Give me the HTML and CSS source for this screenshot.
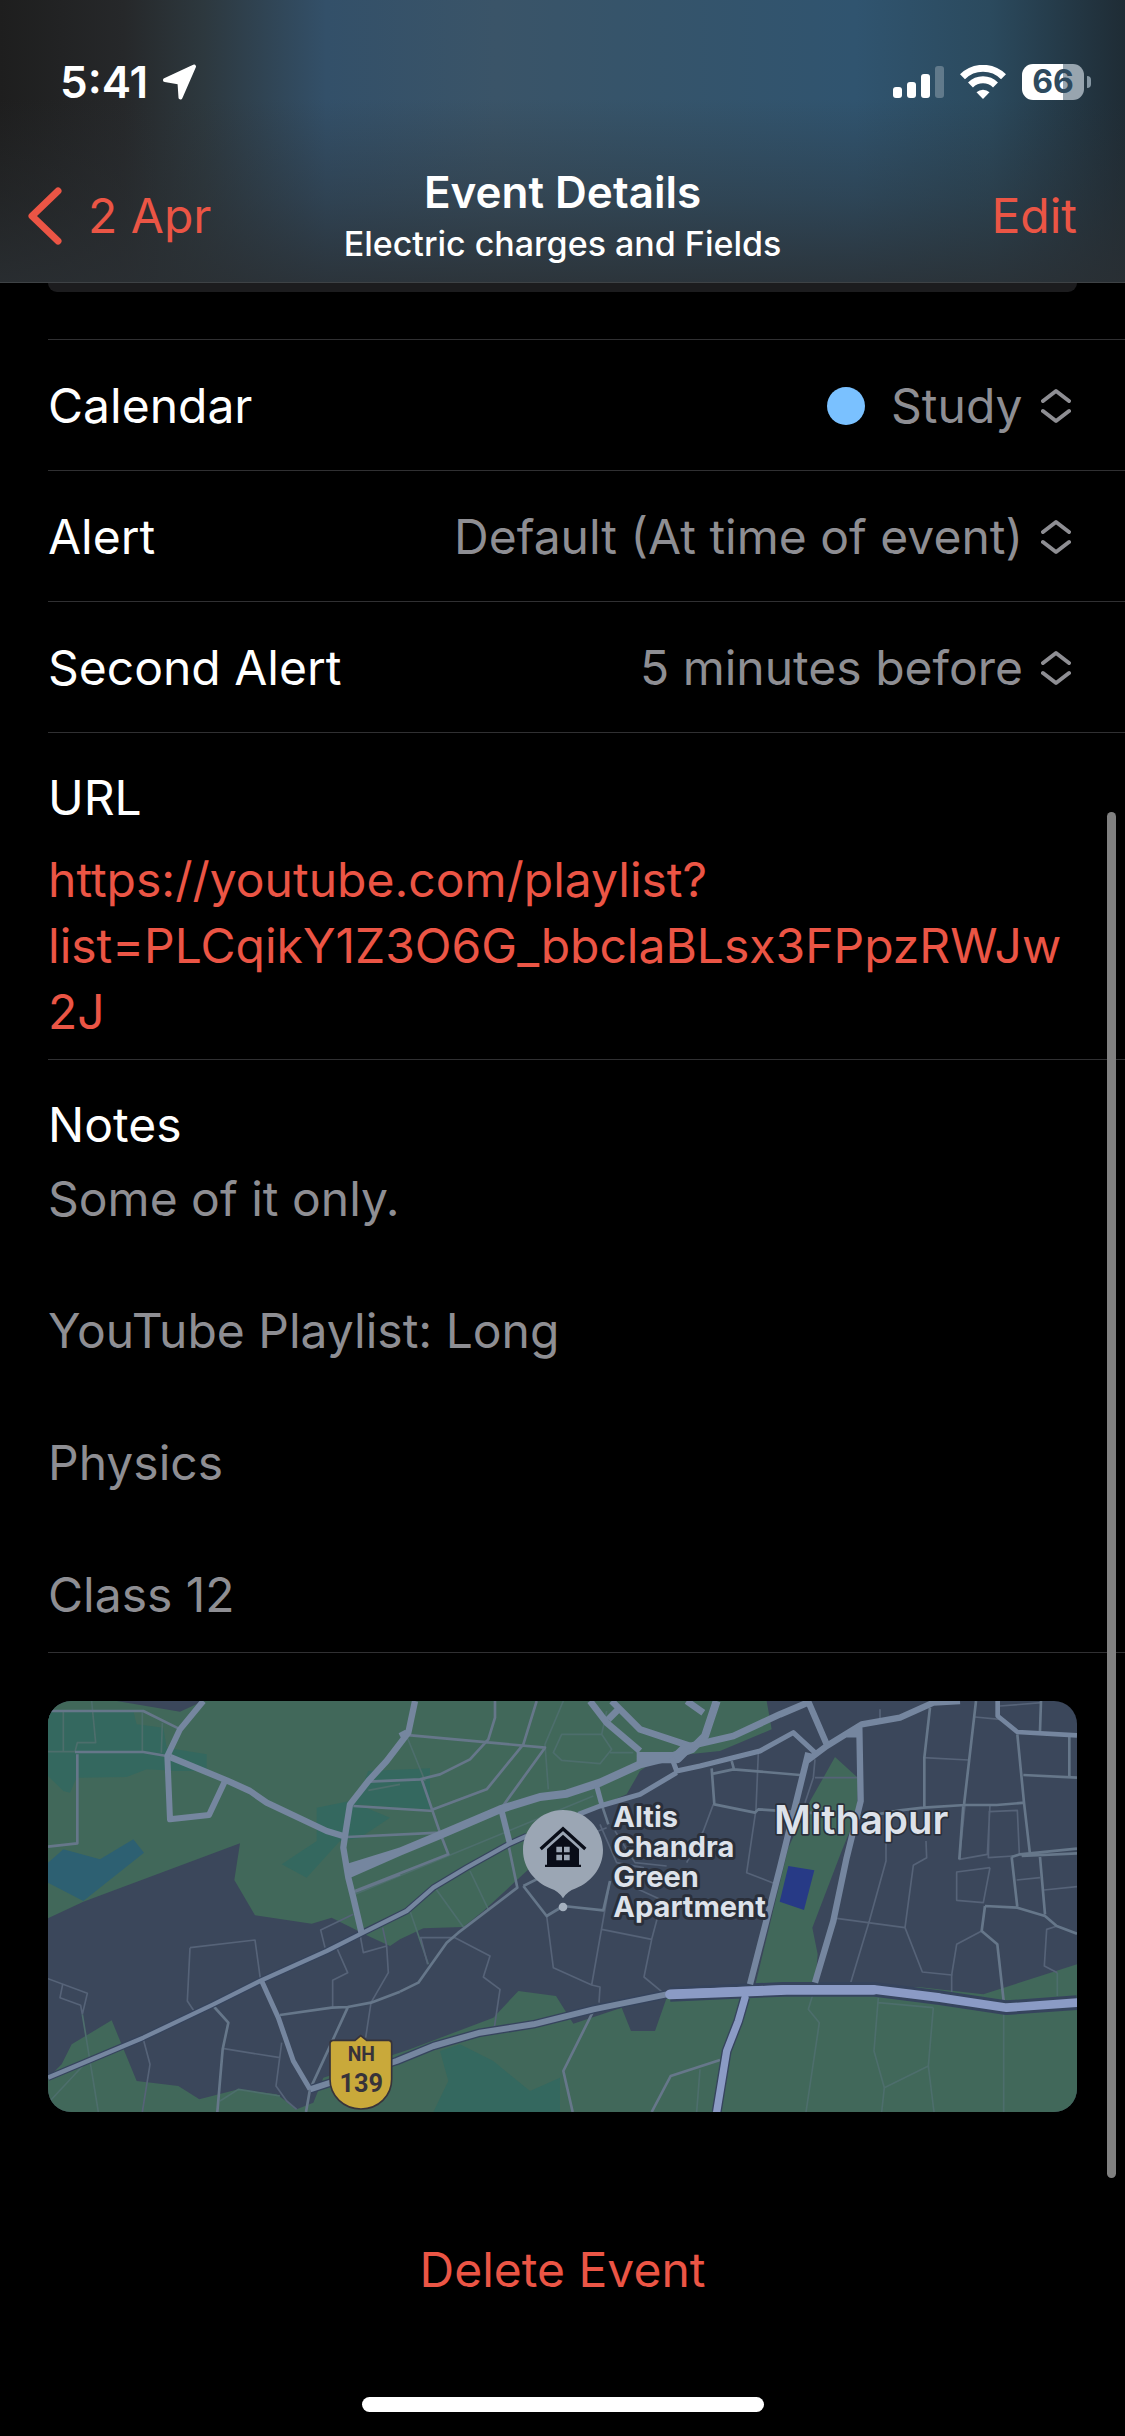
FILE: index.html
```html
<!DOCTYPE html>
<html lang="en">
<head>
<meta charset="utf-8">
<meta name="viewport" content="width=device-width, initial-scale=1">
<title>Event Details</title>
<link rel="stylesheet" href="styles.css">
</head>
<body>
<div class="screen">
  <header class="header">
    <div class="status">
      <div class="status-side">
        <span class="time">5:41</span>
        <svg class="location" viewBox="0 0 36 36" aria-hidden="true"><path d="M3 16 32 2.5 18.5 33.500 17.500 18.500Z" fill="#fff" stroke="#fff" stroke-width="4" stroke-linejoin="round"/></svg>
      </div>
      <div class="status-side status-icons">
        <svg class="signal" viewBox="0 0 51 32" aria-hidden="true" fill="#fff"><rect y="21" width="9" height="11" rx="3"/><rect x="14" y="16" width="9" height="16" rx="3"/><rect x="28" y="8" width="9" height="24" rx="3"/><rect x="42" width="9" height="32" rx="3" opacity=".25"/></svg>
        <svg class="wifi" viewBox="0 0 46 34" aria-hidden="true"><g fill="none" stroke="#fff" stroke-width="7"><path d="M2.500 11.800a29 29 0 0 1 41 0"/><path d="M10.500 20a17.800 17.800 0 0 1 25 0"/></g><path d="M23 34 16.500 27.300a9.300 9.300 0 0 1 13 0Z" fill="#fff"/></svg>
        <div class="battery"><span class="battery-body">66</span><span class="battery-tip"></span></div>
      </div>
    </div>
    <nav class="nav">
      <a class="back" href="#day">
        <svg class="back-icon" viewBox="0 0 34 58" aria-hidden="true"><path d="M30 4 4 29 30 54" fill="none" stroke="currentColor" stroke-width="7" stroke-linecap="round" stroke-linejoin="round"/></svg>
        <span>2 Apr</span>
      </a>
      <div class="titles">
        <h1 class="title">Event Details</h1>
        <p class="subtitle">Electric charges and Fields</p>
      </div>
      <button class="edit" type="button">Edit</button>
    </nav>
  </header>

  <main class="content">
    <div class="card-edge"></div>
    <div class="row">
      <label for="calendar">Calendar</label>
      <div class="value">
        <span class="dot"></span>
        <select id="calendar"><option>Study</option></select>
        <svg class="updown" viewBox="0 0 30 36" aria-hidden="true"><path d="M2 13 15 3 28 13M2 23 15 33 28 23"/></svg>
      </div>
    </div>
    <div class="row">
      <label for="alert">Alert</label>
      <div class="value">
        <select id="alert"><option>Default (At time of event)</option></select>
        <svg class="updown" viewBox="0 0 30 36" aria-hidden="true"><path d="M2 13 15 3 28 13M2 23 15 33 28 23"/></svg>
      </div>
    </div>
    <div class="row">
      <label for="second-alert">Second Alert</label>
      <div class="value">
        <select id="second-alert"><option>5 minutes before</option></select>
        <svg class="updown" viewBox="0 0 30 36" aria-hidden="true"><path d="M2 13 15 3 28 13M2 23 15 33 28 23"/></svg>
      </div>
    </div>
    <section class="block url-block">
      <h2 class="label">URL</h2>
      <a class="url" href="https://youtube.com/playlist?list=PLCqikY1Z3O6G_bbclaBLsx3FPpzRWJw2J">https://youtube.com/playlist?<wbr>list=PLCqikY1Z3O6G_bbclaBLsx3FPpzRWJw<wbr>2J</a>
    </section>
    <section class="block notes-block">
      <h2 class="label">Notes</h2>
      <p class="notes">Some of it only.

YouTube Playlist: Long

Physics

Class 12</p>
    </section>

    <div class="map-wrap">
    <svg class="map" viewBox="144 60 3087 1233" role="img" aria-label="Map of Mithapur">
      <rect x="144" y="60" width="3087" height="1233" fill="#3b475b"/>
      <g fill="#41685a">
        <path d="M144 85 200 60H350L540 92 610 60H2300L2315 145 2160 210 2080 218 1970 235 1920 270 1880 340 1740 400 1640 520 1580 570 1450 690 1390 738 1270 742 1200 775 1170 795 1105 765 995 710 935 728 765 703 703 597 720 487 250 662 144 712Z"/>
        <path d="M144 1190 185 1150 215 1090 335 1018 410 1200 535 1215 598 1255 715 1225 830 1240 890 1285 940 1265 970 1190 1230 1105 1480 1010 1555 930 1668 945 1720 1028 1865 980 1893 1050 1965 1050 2000 950 2240 935 2755 918 2950 940 3231 850V1293H144Z"/>
        <path d="M2265 915 2365 500 2425 370 2505 228 2575 292 2570 400 2525 510 2437 740 2453 820 2445 915Z"/>
      </g>
      <g fill="#34685f">
        <path d="M144 90H400L410 130 490 140 500 200 620 220 620 270 530 270 440 265 380 288 230 290 210 335 190 330 144 285Z"/>
        <path d="M950 380 1050 360 1170 410 1080 470 1020 480 920 590 845 550 950 480Z"/>
        <path d="M1105 270 1290 262 1290 385 1200 380 1065 370Z"/>
        <path d="M1320 1110 1380 1090 1480 1140 1590 1230 1680 1190V1293H1300L1345 1200Z"/>
      </g>
      <path d="M144 545 190 505 300 535 400 475 432 515 250 660 144 605Z" fill="#2d6072"/>
      <path d="M2365 555 2443 568 2412 687 2339 662Z" fill="#273a86"/>

      <g class="lane faint">
        <path d="M190 90V212M275 60 287 185H232L225 212M144 212H225M427 90V212M487 125 484 215M150 1260 262 1140M247 1000 295 1293M660 1260 715 1225 840 1245"/>
        <path d="M1200 310 1105 328M1220 165 1275 300M1690 60 1635 190 1645 325M1660 215 1685 160H1805L1835 205 1800 248 1685 238ZM1805 160 1820 90M1830 215H1900M1065 640 1780 345"/>
        <path d="M1230 690 1285 850M1305 620 1390 738M1410 570 1465 685"/>
        <path d="M2437 945 2425 985 2458 1025 2418 1293M2635 950 2622 1110 2653 1220 2645 1293M2653 1220 2785 1155M2800 980 2785 1155 2802 1293M2635 965 2800 980M3011 990V1293M2100 1165 2090 1293M3172 945V875"/>
      </g>
      <g class="lane">
        <path d="M144 893 262 937 247 1000M188 910 180 950 242 973 247 1000M570 800 765 777 781 893M570 800 562 960 582 990M430 1075 450 1150 427 1293M672 1103 840 1130M845 1085 828 1215 860 1260 890 1285M1060 700 962 747 975 800M1010 800 1043 875 998 898V980M1080 760 1090 815 1160 795 1148 740M1160 795 1165 875 1113 965 1097 1070"/>
        <path d="M1283 850 1262 770H1365L1470 825 1450 888 1500 925 1483 1040M1640 705 1660 860 1775 912 1800 918 1797 965M1805 745 1955 775 1932 888 1995 940M1955 775 1975 700M1800 430 1850 545 1930 560 1905 620 1980 655M1845 450 1905 545 2000 555M1820 440 1730 475M1830 600 1775 912"/>
        <path d="M2275 215 2268 385 2240 575 2325 608M2060 545 2110 450 2140 370M2445 235 2440 290 2415 365M2445 290H2575M2658 480 2658 540 2608 720 2552 905M2510 712 2715 740 2767 873 2855 882 2870 790 2945 750M2715 740 2740 553 2780 530 2778 480M2770 230 2905 237M2925 108 3000 115M2640 85V118"/>
        <path d="M2970 372 2962 520 2878 535 2895 372M2968 392 3052 388 3058 520M2968 390 2965 530 3040 525M2970 560 2870 573V658L2950 665 2970 560M3050 597 3120 590M3132 627 3231 617M2855 880V940M3172 735 3140 745 3133 855 3172 875M3000 75 3125 65"/>
      </g>
      <g class="street">
        <path d="M232 220V487L144 497M144 90H430L535 142M225 213H430L500 225M640 975 685 1025 668 1105 652 1293M840 1002 995 980 1043 978 1113 965 1200 932M1043 980 930 1225 918 1293"/>
        <path d="M1040 468 1320 455M1060 375 1300 390M1105 302 1260 295 1320 280 1410 235 1465 175 1485 110V60M1200 160 1635 200 1505 380M1570 190 1610 60M1570 190 1460 325 1300 385M1265 295 1320 455 1345 520 1065 630M1065 632 1200 580"/>
        <path d="M1525 490 1552 620 1375 755 1340 785 1255 905 1200 932M1570 615 1640 705 1690 675 1810 688 1830 600M1570 615 1620 590M1805 370 1825 430M1780 990 1690 1170 1718 1293M1955 1293 2012 1185 2160 1137"/>
        <path d="M2135 262 2143 370 2265 395 2275 385 2500 400M2140 278 2200 265 2400 282M2195 240 2202 265"/>
        <path d="M2790 80 2773 230V380M2928 60 2892 372M2890 372 2878 535M2575 410 2700 388 2770 380 2895 372H2990L3075 365M3052 160 3072 365 3090 520M3123 60 3120 150M3208 165V285M3070 282 3231 290M3035 528 3060 520 3231 503M3065 525 3231 517M3035 528 3052 678M3120 528 3135 700M2955 675 3052 680 3135 705 3170 735 3231 758M2955 675 2945 750 2992 790 3011 960"/>
      </g>
      <g class="casing">
        <path d="M144 1190 430 1070 640 970 780 900 980 810 1085 757 1220 690 1300 620 1400 560 1525 490 1580 465" stroke-width="20"/>
        <path d="M930 1225 1190 1140 1300 1095 1440 1055 1600 1030 1780 985 2000 940" stroke-width="26"/>
        <path d="M2010 940 2350 925H2620L2820 950 3020 980 3231 965" stroke-width="44"/>
        <path d="M2235 950 2215 1020 2180 1110 2150 1293" stroke-width="30"/>
      </g>
      <g class="road">
        <path d="M610 60 540 145 502 225 510 415 627 402 675 300" stroke-width="18"/>
        <path d="M510 228 680 298 750 330 800 365 980 450 1030 465M1245 60 1225 155 1160 240 1105 300 1050 370 1035 465 1030 500 1045 590 1060 650 1085 757M1200 165 1220 155" stroke-width="19"/>
        <path d="M1045 580 1200 512 1320 462 1500 385 1620 348 1700 338 1800 305 1920 250 2020 225 2075 205 2115 165 2150 60M1045 560 1200 512" stroke-width="24"/>
        <path d="M1835 60 1920 145 2070 195 2200 165 2340 100 2430 62M1770 60 1820 125 1920 210M1825 115 1855 85M2060 60 2110 95" stroke-width="20"/>
        <path d="M1910 230H2030L2060 200" stroke-width="34"/>
        <path d="M2015 230 2030 270 2100 255 2280 210 2380 155 2445 215M2030 275 1920 340 1800 375 1735 400M1790 315 1805 370" stroke-width="15"/>
        <path d="M1505 390 1530 490" stroke-width="18"/>
        <path d="M144 1190 430 1070 640 970 780 900 980 810 1085 757 1220 690 1300 620 1400 560 1525 490 1580 465" stroke-width="13"/>
        <path d="M785 900 835 1010 880 1140 930 1225" stroke-width="15"/>
        <path d="M930 1225 1190 1140 1300 1095 1440 1055 1600 1030 1780 985 2000 940" stroke-width="18"/>
        <path d="M2425 62 2480 190M2420 240 2480 195 2585 130 2700 110 2800 65 2880 60M2425 215 2340 560 2250 910M2540 160 2580 160M2578 140 2582 360 2540 530 2500 720 2445 905" stroke-width="19"/>
        <path d="M2993 60V105L3052 153 3231 163" stroke-width="14"/>
      </g>
      <g class="highway">
        <path d="M2010 940 2350 925H2620L2820 950 3020 980 3231 965" stroke-width="26"/>
        <path d="M2235 950 2215 1020 2180 1110 2150 1293" stroke-width="22"/>
        <path d="M2010 940 2360 927H2620" stroke-width="29"/>
      </g>

      <path d="M1000 1078H1065L1082 1064 1100 1078H1166Q1175 1078 1175 1088V1195C1175 1245 1135 1284 1083 1284S990 1245 990 1195V1088Q990 1078 1000 1078Z" fill="#c9a93a" stroke="#37333a" stroke-width="5"/>
      <text class="shield shield-top" x="1084" y="1141">NH</text>
      <text class="shield" x="1084" y="1233">139</text>

      <path d="M1689 387C1755 387 1809 441 1809 507C1809 563 1771 604 1728 622Q1700 632 1689 652Q1678 632 1650 622C1607 604 1569 563 1569 507C1569 441 1623 387 1689 387Z" fill="#9ba6b4"/>
      <circle cx="1689" cy="678" r="13" fill="#a5b1bf"/>
      <path d="M1622 504 1689 443 1756 504" fill="none" stroke="#090d18" stroke-width="10"/>
      <path d="M1689 461 1737 504V551H1743V558H1635V551H1641V504Z" fill="#090d18"/>
      <path d="M1669 497H1686V514H1669ZM1692 497H1709V514H1692ZM1669 521H1686V538H1669ZM1692 521H1709V538H1692Z" fill="#9ba6b4"/>
      <text class="place" x="1840" y="438">Altis<tspan x="1840" dy="90">Chandra</tspan><tspan x="1840" dy="90">Green</tspan><tspan x="1840" dy="90">Apartment</tspan></text>
      <text class="town" x="2322" y="460">Mithapur</text>
    </svg>
    </div>

    <button class="delete" type="button">Delete Event</button>
  </main>
  <div class="home-bar"></div>
  <div class="scroll-thumb"></div>
</div>
</body>
</html>
```
FILE: styles.css
```css
* {
  box-sizing: border-box;
  margin: 0;
}

body {
  background: #000;
  color: #fff;
  font-family: Inter, "Liberation Sans", sans-serif;
  font-size: 48px;
  line-height: 66px;
}

.screen {
  position: relative;
  display: flex;
  flex-direction: column;
  min-height: 100vh;
}

button,
select {
  appearance: none;
  padding: 0;
  border: 0;
  background: none;
  font: inherit;
}

/* Header */

.header {
  border-bottom: 1px solid #3e4245;
  background:
    linear-gradient(to bottom, transparent 35%, rgba(42, 47, 51, 0.4) 70%, rgba(42, 47, 51, 0.85)),
    linear-gradient(to right, #1e1e1e, #26282a 11%, #2d383e 18%, #335069 29%, #3a5468 44%, #36546a 55%, #30546f 76%, #2b4a5e 88%, #1f2c35);
}

.status {
  display: flex;
  align-items: center;
  justify-content: space-between;
  height: 150px;
  padding: 14px 34px 0 60px;
}

.status-side {
  display: flex;
  align-items: center;
  gap: 14px;
}

.status-icons {
  gap: 16px;
}

.time {
  font-size: 44px;
  font-weight: 600;
}

.location {
  width: 36px;
  height: 36px;
}

.signal {
  width: 51px;
  height: 32px;
}

.wifi {
  width: 46px;
  height: 34px;
}

.battery {
  display: flex;
  align-items: center;
  gap: 3px;
}

.battery-body {
  width: 62px;
  height: 36px;
  border-radius: 11px;
  background: linear-gradient(to right, #fff 66%, #98a5af 66%);
  color: #2e4a5e;
  font-size: 32px;
  font-weight: 700;
  line-height: 36px;
  text-align: center;
}

.battery-tip {
  width: 4px;
  height: 12px;
  border-radius: 0 4px 4px 0;
  background: #8697a3;
}

.nav {
  display: grid;
  grid-template-columns: 1fr auto 1fr;
  align-items: center;
  height: 132px;
  padding: 0 28px;
}

.back {
  display: flex;
  align-items: center;
  gap: 26px;
  color: #eb5545;
  text-decoration: none;
}

.back-icon {
  width: 34px;
  height: 58px;
}

.titles {
  padding-bottom: 4px;
  text-align: center;
}

.title {
  font-size: 44px;
  font-weight: 600;
  line-height: 60px;
}

.subtitle {
  font-size: 34px;
  font-weight: 500;
  line-height: 44px;
}

.edit {
  justify-self: end;
  margin-right: 20px;
  color: #eb5545;
}

/* Details */

.content {
  padding-left: 48px;
}

.card-edge {
  height: 57px;
  border-bottom: 1px solid #303032;
}

.card-edge::before {
  content: "";
  display: block;
  height: 9px;
  margin-right: 48px;
  border-radius: 0 0 14px 14px;
  background: #1c1c1e;
}

.row {
  display: flex;
  align-items: center;
  justify-content: space-between;
  height: 131px;
  padding: 2px 54px 0 0;
  border-bottom: 1px solid #303032;
}

.value {
  display: flex;
  align-items: center;
  gap: 18px;
  color: #8e8e93;
}

.value select {
  color: inherit;
}

.dot {
  width: 38px;
  height: 38px;
  margin-right: 8px;
  border-radius: 50%;
  background: #7ac1ff;
}

.updown {
  width: 30px;
  height: 36px;
  fill: none;
  stroke: currentColor;
  stroke-width: 4;
  stroke-linecap: round;
  stroke-linejoin: round;
}

.block {
  padding: 32px 48px 14px 0;
  border-bottom: 1px solid #303032;
}

.label {
  font-size: 48px;
  font-weight: 400;
}

.url {
  display: block;
  margin-top: 16px;
  color: #eb5545;
  text-decoration: none;
}

.notes-block {
  padding-bottom: 24px;
}

.notes {
  margin-top: 8px;
  color: #8e8e93;
  white-space: pre-line;
}

/* Map */

.map-wrap {
  padding: 48px 48px 0 0;
}

.map {
  display: block;
  width: 100%;
  border-radius: 23px;
}

.map g {
  stroke-linejoin: round;
}

.lane,
.street,
.casing,
.road,
.highway {
  fill: none;
}

.lane {
  stroke: #566378;
  stroke-width: 5;
}

.faint {
  stroke: #4d6e6c;
}

.street {
  stroke: #66778a;
  stroke-width: 8;
}

.casing {
  stroke: #36445d;
}

.road {
  stroke: #75869f;
}

.highway {
  stroke: #8b9bc5;
  stroke-linecap: round;
}

.shield {
  fill: #37333a;
  font-family: Roboto, sans-serif;
  font-size: 76px;
  font-weight: 700;
  text-anchor: middle;
}

.shield-top {
  font-size: 58px;
}

.place,
.town {
  fill: #dde2ea;
  font-weight: 600;
  paint-order: stroke;
  stroke: #2a2f3a;
  stroke-linejoin: round;
}

.place {
  font-size: 87px;
  font-weight: 700;
  stroke-width: 18;
}

.town {
  font-size: 120px;
  stroke-width: 10;
}

/* Footer */

.delete {
  display: block;
  margin: 125px auto 0;
  padding-right: 48px;
  color: #eb5545;
}

.home-bar {
  align-self: center;
  width: 402px;
  height: 15px;
  margin-top: auto;
  margin-bottom: 24px;
  border-radius: 8px;
  background: #fff;
}

.scroll-thumb {
  position: absolute;
  top: 812px;
  right: 9px;
  bottom: 258px;
  width: 9px;
  border-radius: 5px;
  background: #808080;
}
```
